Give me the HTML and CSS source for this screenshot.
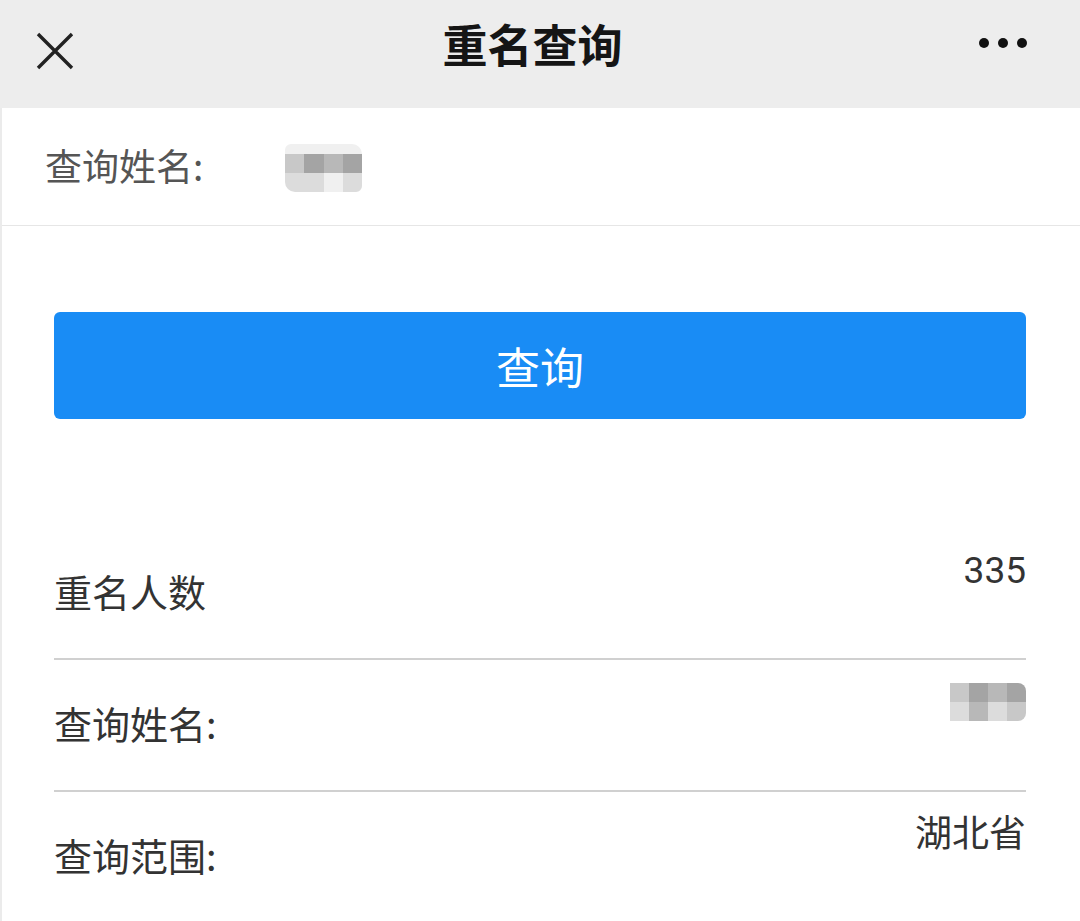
FILE: index.html
```html
<!DOCTYPE html>
<html lang="zh-CN">
<head>
<meta charset="utf-8">
<title>重名查询</title>
<link rel="stylesheet" href="styles.css">
</head>
<body>
<header class="topbar">
  <svg class="close" width="40" height="40" viewBox="0 0 40 40"><path d="M3 3 L37 37 M37 3 L3 37" stroke="#222" stroke-width="3.4" stroke-linecap="butt" fill="none"/></svg>
  <h1 class="title">重名查询</h1>
  <svg class="more" width="50" height="12" viewBox="0 0 50 12"><circle cx="6" cy="6" r="5"/><circle cx="25" cy="6" r="5"/><circle cx="44" cy="6" r="5"/></svg>
</header>
<main class="page">
  <div class="query-row">
    <span class="query-label">查询姓名:</span>
    <div class="mosaic mosaic-top">
      <i class="m1"></i><i class="m1"></i><i class="m1"></i><i class="m1"></i>
      <i class="m3"></i><i class="m5"></i><i class="m4"></i><i class="m5"></i>
      <i class="m2"></i><i class="m2"></i><i class="m1"></i><i class="m2"></i>
    </div>
  </div>
  <div class="btn-wrap">
    <button class="btn">查询</button>
  </div>
  <section class="results">
    <div class="row">
      <span class="label">重名人数</span>
      <span class="value">335</span>
    </div>
    <div class="row">
      <span class="label">查询姓名:</span>
      <div class="mosaic mosaic-result">
        <i class="m3"></i><i class="m5"></i><i class="m4"></i><i class="m5"></i>
        <i class="m2"></i><i class="m4"></i><i class="m2"></i><i class="m3"></i>
      </div>
    </div>
    <div class="row">
      <span class="label">查询范围:</span>
      <span class="value">湖北省</span>
    </div>
  </section>
</main>
</body>
</html>
```

FILE: styles.css
```css
* { box-sizing: border-box; }
html, body { margin: 0; padding: 0; }
body {
  width: 1080px;
  height: 921px;
  overflow: hidden;
  background: #fff;
  font-family: Roboto, "Liberation Sans", "Noto Sans CJK SC", sans-serif;
  color: #333;
}
.topbar {
  height: 108px;
  background: #ededed;
  display: flex;
  align-items: center;
  padding: 0 52px 0 35px;
}
.close { display: block; margin-top: -7px; }
.title {
  flex: 1;
  margin: -22px 0 0 12px;
  text-align: center;
  font-family: "Noto Sans CJK SC", sans-serif;
  font-size: 45px;
  font-weight: 700;
  color: #151515;
  line-height: 1;
}
.more { display: block; fill: #111; margin-top: -22px; }
.page {
  border-left: 2px solid #ebebeb;
  min-height: 813px;
}
.query-row {
  height: 118px;
  border-bottom: 1px solid #e6e6e6;
  display: flex;
  align-items: center;
  padding-left: 43px;
}
.query-label {
  font-family: "Noto Sans CJK SC", sans-serif;
  font-size: 37px;
  color: #555;
  line-height: 1;
  width: 240px;
  margin-top: -2px;
}
.mosaic {
  display: grid;
  grid-template-columns: repeat(4, 1fr);
  overflow: hidden;
}
.mosaic i { display: block; }
.mosaic-top {
  width: 77px;
  height: 48px;
  grid-template-rows: 10px 19px 19px;
  border-radius: 6px 10px 6px 10px;
  margin-top: 2px;
}
.mosaic-result {
  width: 76px;
  height: 38px;
  grid-template-rows: 1fr 1fr;
  border-radius: 0 8px 8px 0;
  margin-top: 23px;
}
.m1 { background: #f0f0f0; }
.m2 { background: #dcdcdc; }
.m3 { background: #c8c8c8; }
.m4 { background: #b8b8b8; }
.m5 { background: #a4a4a4; }
.btn-wrap { padding: 86px 54px 0 52px; }
.btn {
  display: block;
  width: 100%;
  height: 107px;
  border: none;
  border-radius: 6px;
  background: #198cf5;
  color: #fff;
  font-family: "Noto Sans CJK SC", sans-serif;
  font-size: 44px;
  line-height: 1;
  padding: 0;
}
.results { padding: 109px 54px 0 52px; }
.row {
  display: flex;
  justify-content: space-between;
  align-items: flex-start;
  height: 132px;
  border-bottom: 2px solid #d0d0d0;
}
.row:last-child { border-bottom: none; }
.label {
  font-family: "Noto Sans CJK SC", sans-serif;
  font-size: 38px;
  line-height: 40px;
  margin-top: 43px;
  color: #333;
}
.value {
  font-family: Roboto, "Noto Sans CJK SC", sans-serif;
  font-size: 37px;
  line-height: 40px;
  margin-top: 23px;
  color: #333;
}
```
